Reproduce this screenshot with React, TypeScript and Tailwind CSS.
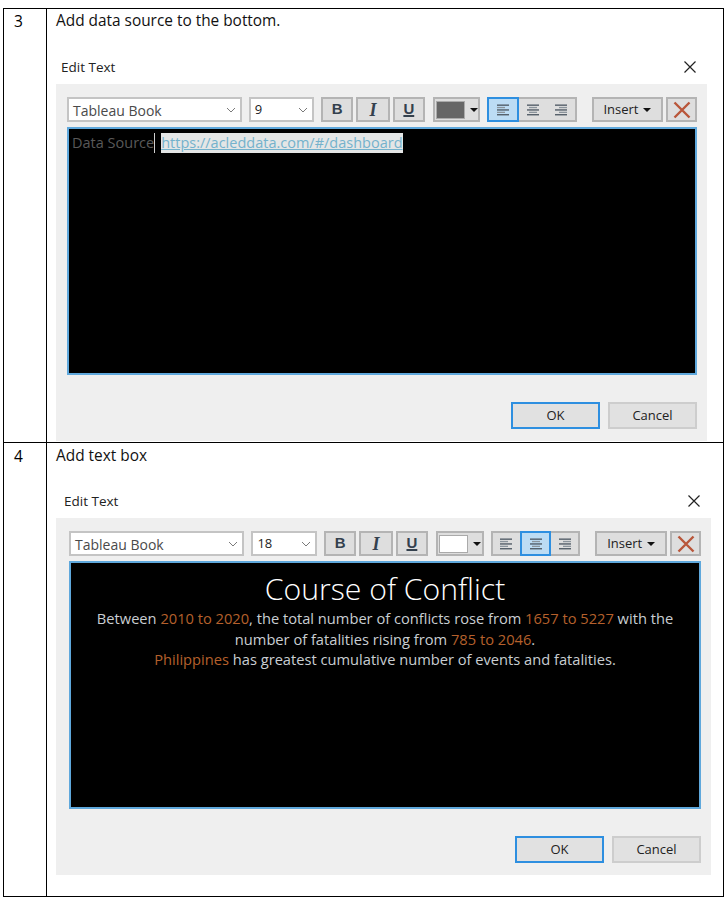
import React from "react";

const sans = "font-['Open_Sans',sans-serif]";

function Caret() {
  return (
    <svg width="10" height="6" viewBox="0 0 10 6" className="text-[#7a7a7a]">
      <path d="M1 1l4 4 4-4" fill="none" stroke="currentColor" strokeWidth="1" />
    </svg>
  );
}

function Tri() {
  return (
    <svg width="8" height="4" viewBox="0 0 8 4">
      <path d="M0 0h8L4 4z" fill="#111" />
    </svg>
  );
}

function Lines({ kind }: { kind: "l" | "c" | "r" }) {
  const short = kind === "l" ? [0, 8] : kind === "c" ? [2, 8] : [4, 8];
  const rows = [[0, 12], short, [0, 12], short, [0, 12]];
  return (
    <svg width="12" height="12" viewBox="0 0 12 12">
      {rows.map((r, i) => (
        <rect key={i} x={r[0]} y={0.5 + i * 2.4} width={r[1]} height="1.3" fill={i % 2 ? "#8b949c" : "#4a5560"} />
      ))}
    </svg>
  );
}

function ToolBtn({ children, w, cls = "" }: { children: React.ReactNode; w: string; cls?: string }) {
  return (
    <div className={`${w} h-[25px] border-2 border-[#b4b4b4] bg-[#dedede] flex items-center justify-center ${cls}`}>
      {children}
    </div>
  );
}

function Dialog({
  size,
  swatch,
  active,
  mt,
  titleX,
  panelW,
  panelPl,
  children,
}: {
  size: string;
  swatch: string;
  active: "l" | "c";
  mt: string;
  titleX: string;
  panelW: string;
  panelPl: string;
  children: React.ReactNode;
}) {
  const kinds: ("l" | "c" | "r")[] = ["l", "c", "r"];
  return (
    <div className={mt}>
      <div className={`flex items-center justify-between h-[20px] ${panelW} pr-[10px] ${titleX}`}>
        <span className="text-[13.5px] text-[#222]">Edit Text</span>
        <svg width="14" height="14" viewBox="0 0 14 14">
          <path d="M1.5 1.5l11 11M12.5 1.5l-11 11" stroke="#222" strokeWidth="1.2" fill="none" />
        </svg>
      </div>
      <div className={`mt-[7px] ${panelW} ${panelPl} pr-[10px] pt-[13px] pb-[12px] bg-[#efefef]`}>
        <div className="flex h-[25px]">
          <div className="w-[176px] h-[25px] bg-white border-2 border-[#c4c4c4] flex items-center justify-between pl-[4px] pr-[4px]">
            <span className="text-[14px] text-[#4a4a4a] leading-none pt-[2px]">Tableau Book</span>
            <Caret />
          </div>
          <div className="ml-[7px] w-[66px] h-[25px] bg-white border-2 border-[#c4c4c4] flex items-center justify-between pl-[4px] pr-[4px]">
            <span className="text-[13px] text-[#222] leading-none">{size}</span>
            <Caret />
          </div>
          <ToolBtn w="w-[32px] ml-[7px]">
            <span className="text-[15px] font-bold text-[#34414e] font-['Liberation_Sans',sans-serif]">B</span>
          </ToolBtn>
          <ToolBtn w="w-[34px] ml-[3px]">
            <span className="text-[18px] leading-none font-bold italic text-[#34414e] font-['Liberation_Serif',serif]">I</span>
          </ToolBtn>
          <ToolBtn w="w-[32px] ml-[3px]">
            <span className="text-[15px] font-bold underline decoration-2 text-[#34414e] font-['Liberation_Sans',sans-serif]">U</span>
          </ToolBtn>
          <ToolBtn w="w-[48px] ml-[8px] gap-[5px]">
            <span className={`block w-[29px] h-[18px] border border-[#aaa] ${swatch}`} />
            <Tri />
          </ToolBtn>
          <div className="ml-[7px] flex w-[90px] h-[25px] bg-[#dedede] border-2 border-[#b4b4b4] relative">
            {kinds.map((k) => (
              <div
                key={k}
                className={
                  k === active
                    ? "flex-1 -my-[2px] first:-ml-[2px] h-[25px] flex items-center justify-center bg-[#bcdcf4] border-2 border-[#2e8fe0]"
                    : "flex-1 flex items-center justify-center"
                }
              >
                <Lines kind={k} />
              </div>
            ))}
          </div>
          <ToolBtn w="w-[72px] ml-[15px] gap-[5px]">
            <span className="text-[13px] text-[#222]">Insert</span>
            <Tri />
          </ToolBtn>
          <ToolBtn w="w-[31px] ml-[3px]">
            <svg width="18" height="18" viewBox="0 0 18 18">
              <path d="M1.5 1.5l15 15M16.5 1.5l-15 15" stroke="#b9563a" strokeWidth="2.4" fill="none" />
            </svg>
          </ToolBtn>
        </div>
        <div className="mt-[5px] h-[248px] bg-black border-2 border-[#5fa8dc]">{children}</div>
        <div className="mt-[27px] flex justify-end gap-[8px]">
          <div className="w-[89px] h-[27px] bg-[#e1e1e1] border-2 border-[#2e8fe0] flex items-center justify-center text-[13px] text-[#222]">
            OK
          </div>
          <div className="w-[89px] h-[27px] bg-[#e1e1e1] border-2 border-[#cdcdcd] flex items-center justify-center text-[13px] text-[#222]">
            Cancel
          </div>
        </div>
      </div>
    </div>
  );
}

export default function App() {
  const o = "text-[#b5602c]";
  return (
    <div className={`w-[728px] h-[902px] bg-white ${sans} overflow-hidden`}>
      <div className="ml-[3px] mt-[8px] w-[721px] border border-black">
        <div className="flex h-[434px] border-b border-black">
          <div className="w-[43px] border-r border-black pl-[10px] pt-[2px] text-[15.5px] leading-[21px] text-black">3</div>
          <div className="flex-1 pl-[9px] pt-[1px]">
            <div className="text-[15.4px] leading-[21px] text-[#111]">Add data source to the bottom.</div>
            <Dialog mt="mt-[26px]" size="9" swatch="bg-[#666666]" active="l" titleX="pl-[5px]" panelW="w-[651px]" panelPl="pl-[11px]">
              <div className="pl-[3px] pt-[4px] text-[14.5px] leading-[20px] flex items-center">
                <span className="text-[#595959]">Data Source</span>
                <span className="inline-block w-[1px] h-[20px] bg-[#cfcfcf] mr-[6px]" />
                <span className="underline text-[#74b2cc] bg-[#e4e6e6]">https://acleddata.com/#/dashboard</span>
              </div>
            </Dialog>
          </div>
        </div>
        <div className="flex h-[453px]">
          <div className="w-[43px] border-r border-black pl-[10px] pt-[3px] text-[15.5px] leading-[21px] text-black">4</div>
          <div className="flex-1 pl-[9px] pt-[2px]">
            <div className="text-[15.4px] leading-[21px] text-[#111]">Add text box</div>
            <Dialog mt="mt-[25px]" size="18" swatch="bg-white" active="c" titleX="pl-[8px]" panelW="w-[655px]" panelPl="pl-[13px]">
              <div className="text-center pt-[8px] text-[#c9ced2]">
                <div className="text-[30.2px] leading-[36px] font-light text-white">Course of Conflict</div>
                <div className="text-[14.66px] leading-[20.5px] pt-[1px]">
                  Between <span className={o}>2010 to 2020</span>, the total number of conflicts rose from{" "}
                  <span className={o}>1657 to 5227</span> with the
                  <br />
                  number of fatalities rising from <span className={o}>785 to 2046</span>.
                  <br />
                  <span className={o}>Philippines</span> has greatest cumulative number of events and fatalities.
                </div>
              </div>
            </Dialog>
          </div>
        </div>
      </div>
    </div>
  );
}
